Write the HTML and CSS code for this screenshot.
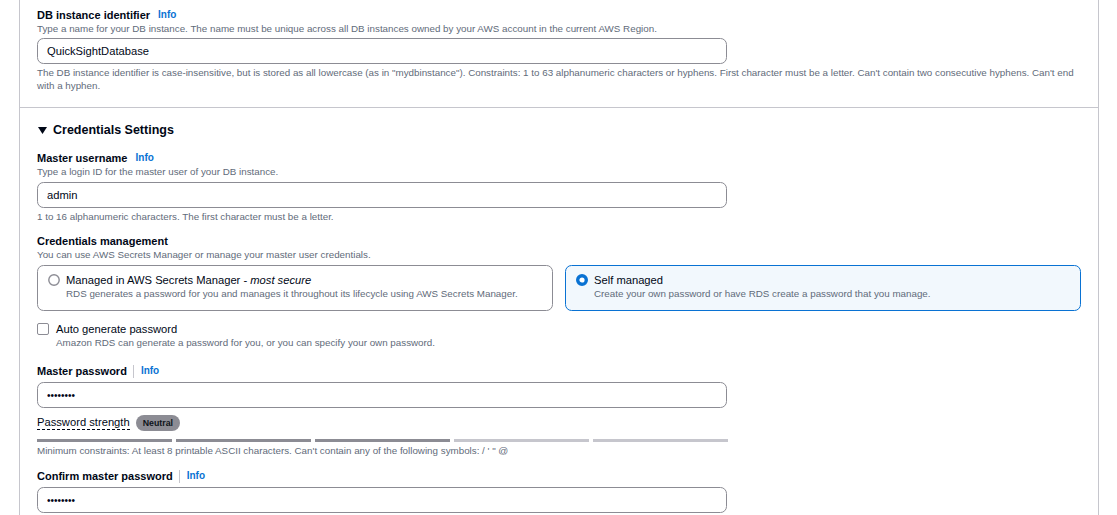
FILE: index.html
```html
<!DOCTYPE html>
<html lang="en">
<head>
<meta charset="utf-8">
<title>Create database</title>
<link rel="stylesheet" href="styles.css">
</head>
<body>
<div class="panel">
  <section class="section first">
    <div class="label-row"><span class="label">DB instance identifier</span><a class="info">Info</a></div>
    <div class="desc">Type a name for your DB instance. The name must be unique across all DB instances owned by your AWS account in the current AWS Region.</div>
    <input class="input" type="text" value="QuickSightDatabase" readonly>
    <div class="hint">The DB instance identifier is case-insensitive, but is stored as all lowercase (as in "mydbinstance"). Constraints: 1 to 63 alphanumeric characters or hyphens. First character must be a letter. Can't contain two consecutive hyphens. Can't end with a hyphen.</div>
  </section>
  <section class="section second">
    <h2 class="heading"><svg class="caret" width="9" height="7" viewBox="0 0 9 7"><polygon points="0,0 9,0 4.5,7" fill="#000716"/></svg>Credentials Settings</h2>

    <div class="field f-user">
      <div class="label-row"><span class="label">Master username</span><a class="info">Info</a></div>
      <div class="desc">Type a login ID for the master user of your DB instance.</div>
      <input class="input" type="text" value="admin" readonly>
      <div class="hint">1 to 16 alphanumeric characters. The first character must be a letter.</div>
    </div>

    <div class="field f-cred">
      <div class="label-row"><span class="label">Credentials management</span></div>
      <div class="desc">You can use AWS Secrets Manager or manage your master user credentials.</div>
      <div class="tiles">
        <div class="tile">
          <svg class="radio" width="12" height="12" viewBox="0 0 12 12"><circle cx="6" cy="6" r="5.2" fill="#fff" stroke="#8c8c94" stroke-width="1.4"/></svg>
          <div class="tile-text">
            <div class="tile-label">Managed in AWS Secrets Manager - <em>most secure</em></div>
            <div class="tile-desc">RDS generates a password for you and manages it throughout its lifecycle using AWS Secrets Manager.</div>
          </div>
        </div>
        <div class="tile selected">
          <svg class="radio" width="12" height="12" viewBox="0 0 12 12"><circle cx="6" cy="6" r="4.3" fill="#fff" stroke="#0972d3" stroke-width="3.4"/></svg>
          <div class="tile-text">
            <div class="tile-label">Self managed</div>
            <div class="tile-desc">Create your own password or have RDS create a password that you manage.</div>
          </div>
        </div>
      </div>
    </div>

    <div class="check-row">
      <span class="checkbox"></span>
      <div>
        <div class="check-label">Auto generate password</div>
        <div class="desc">Amazon RDS can generate a password for you, or you can specify your own password.</div>
      </div>
    </div>

    <div class="field f-pass">
      <div class="label-row"><span class="label">Master password</span><span class="divider"></span><a class="info">Info</a></div>
      <input class="input" type="password" value="abcdefgh" readonly>
    </div>

    <div class="strength-row">
      <span class="strength-label">Password strength</span>
      <span class="badge">Neutral</span>
    </div>
    <div class="bars">
      <span class="bar on"></span><span class="bar on"></span><span class="bar on"></span><span class="bar"></span><span class="bar"></span>
    </div>
    <div class="hint">Minimum constraints: At least 8 printable ASCII characters. Can't contain any of the following symbols: / ' " @</div>

    <div class="field f-confirm">
      <div class="label-row"><span class="label">Confirm master password</span><span class="divider"></span><a class="info">Info</a></div>
      <input class="input" type="password" value="abcdefgh" readonly>
    </div>
  </section>
</div>
</body>
</html>
```

FILE: styles.css
```css
* { box-sizing: border-box; }
html, body { margin: 0; padding: 0; background: #ffffff; }
body {
  font-family: "Liberation Sans", Arial, sans-serif;
  color: #000716;
  overflow: hidden;
}
.panel {
  margin-left: 19px;
  width: 1080px;
  min-height: 100vh;
  border-left: 1px solid #c6c6cd;
  border-right: 1px solid #c6c6cd;
}
.section { padding: 0 17px 0 17px; }
.first { padding-top: 8px; padding-bottom: 15px; }
.second { border-top: 1px solid #c6c6cd; padding-top: 13px; }

.label-row { display: flex; align-items: center; height: 14px; }
.label { font-size: 11px; font-weight: bold; line-height: 14px; }
.info {
  font-size: 10px; font-weight: bold; color: #0972d3; line-height: 14px;
  margin-left: 8px; text-decoration: none;
}
.divider {
  width: 1px; height: 13px; background: #c6c6cd; margin-left: 6px;
}
.divider + .info { margin-left: 7px; }
.desc { font-size: 9.8px; line-height: 13px; color: #5f6b7a; }
.hint { font-size: 9.8px; line-height: 13px; color: #5f6b7a; margin-top: 2px; }

.input {
  display: block;
  width: 690px; height: 26px;
  margin: 4px 0 0 0;
  padding: 0 9px;
  border: 1px solid #8c8c94;
  border-radius: 6.5px;
  font-family: "Liberation Sans", Arial, sans-serif;
  font-size: 11.2px;
  color: #000716;
  background: #fff;
  outline: none;
}
.first .input { margin-top: 3px; }
.input[type="password"] { font-size: 10px; letter-spacing: 0; }

.heading {
  margin: 0; display: flex; align-items: center;
  font-size: 12.5px; font-weight: bold; line-height: 18px;
}
.caret { margin-left: 1px; margin-right: 6px; }

.f-user { margin-top: 12px; }
.f-cred { margin-top: 11px; }
.tiles {
  display: grid; grid-template-columns: 1fr 1fr; column-gap: 12px;
  margin-top: 4px;
}
.tile {
  display: flex; align-items: flex-start; gap: 6px;
  border: 1px solid #8c8c94; border-radius: 6.5px;
  padding: 7px 10px 10px 10px;
  height: 46px;
}
.tile.selected { border-color: #0972d3; background: #f2f8fd; }
.radio { flex: none; margin-top: 1px; }
.tile-label { font-size: 11.2px; line-height: 14px; }
.tile-desc { font-size: 9.8px; line-height: 13px; color: #5f6b7a; }

.check-row { display: flex; align-items: flex-start; gap: 7px; margin-top: 11px; }
.checkbox {
  flex: none; width: 12px; height: 12px; margin-top: 1px;
  border: 1.5px solid #8c8c94; border-radius: 2px; background: #fff;
}
.check-label { font-size: 11.2px; line-height: 14px; }

.f-pass { margin-top: 15px; }
.strength-row { display: flex; align-items: center; gap: 6px; margin-top: 7px; height: 16px; }
.strength-label {
  font-size: 11.2px; line-height: 13px;
  border-bottom: 1px dashed #000716;
}
.badge {
  display: inline-flex; align-items: center; justify-content: center;
  height: 16px; padding: 0 7px; border-radius: 8px;
  background: #8c8c94; color: #0f141a;
  font-size: 8.8px; font-weight: bold;
}
.bars { display: flex; gap: 4px; width: 691px; margin-top: 8px; }
.bar { flex: 1; height: 3px; background: #c6c6cd; }
.bar.on { background: #8c8c94; }

.f-confirm { margin-top: 12px; }
```
